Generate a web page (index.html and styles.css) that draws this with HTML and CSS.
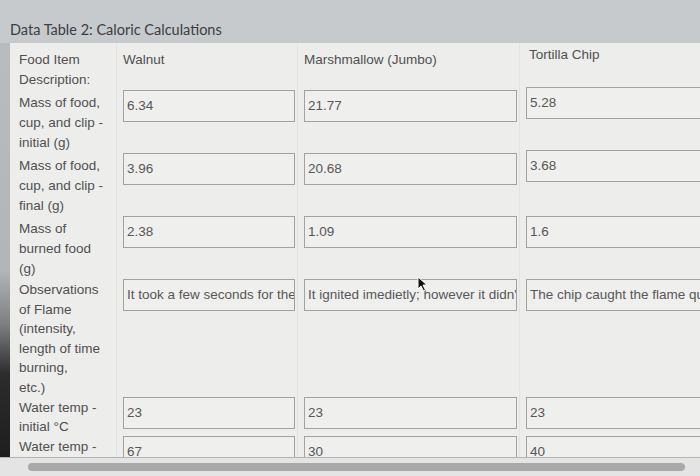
FILE: index.html
```html
<!DOCTYPE html>
<html>
<head>
<meta charset="utf-8">
<link rel="stylesheet" href="styles.css">
</head>
<body>
<div class="screen">
  <h2 class="title">Data Table 2: Caloric Calculations</h2>
  <div class="main">
    <div class="bezel"></div>
    <div class="table-wrap">
      <div class="grid">
        <div class="cell label head">Food Item<br>Description:</div>
        <div class="cell colhead head">Walnut</div>
        <div class="cell colhead head">Marshmallow (Jumbo)</div>
        <div class="cell colhead head tort">Tortilla Chip</div>

        <div class="cell label">Mass of food,<br>cup, and clip -<br>initial (g)</div>
        <div class="cell val"><div class="input">6.34</div></div>
        <div class="cell val"><div class="input">21.77</div></div>
        <div class="cell val"><div class="input up">5.28</div></div>

        <div class="cell label">Mass of food,<br>cup, and clip -<br>final (g)</div>
        <div class="cell val"><div class="input">3.96</div></div>
        <div class="cell val"><div class="input">20.68</div></div>
        <div class="cell val"><div class="input up">3.68</div></div>

        <div class="cell label">Mass of<br>burned food<br>(g)</div>
        <div class="cell val"><div class="input">2.38</div></div>
        <div class="cell val"><div class="input">1.09</div></div>
        <div class="cell val"><div class="input">1.6</div></div>

        <div class="cell label tight">Observations<br>of Flame<br>(intensity,<br>length of time<br>burning,<br>etc.)</div>
        <div class="cell val"><div class="input">It took a few seconds for the walnut to catch fire</div></div>
        <div class="cell val"><div class="input">It ignited imedietly; however it didn't last long</div></div>
        <div class="cell val"><div class="input">The chip caught the flame quickly</div></div>

        <div class="cell label tighter">Water temp -<br>initial °C</div>
        <div class="cell val"><div class="input">23</div></div>
        <div class="cell val"><div class="input">23</div></div>
        <div class="cell val"><div class="input">23</div></div>

        <div class="cell label tighter">Water temp -<br>final °C</div>
        <div class="cell val"><div class="input">67</div></div>
        <div class="cell val"><div class="input">30</div></div>
        <div class="cell val"><div class="input">40</div></div>
      </div>
    </div>
  </div>
  <div class="scrollbar"><div class="thumb"></div></div>
  <svg class="cursor" width="11" height="16" viewBox="0 0 11 16"><path d="M1 1 L1 13 L4 10 L6.5 15 L8.5 14 L6 9 L10 9 Z" fill="#111" stroke="#fff" stroke-width="1"/></svg>
</div>
</body>
</html>
```
FILE: styles.css
```css
html, body {
  margin: 0;
  padding: 0;
}
body {
  width: 700px;
  height: 476px;
  overflow: hidden;
  background: #c6cacd;
}
.screen {
  position: relative;
  width: 700px;
  height: 476px;
  display: flex;
  flex-direction: column;
}
.title {
  margin: 0;
  padding: 20px 0 0 10px;
  height: 23px;
  font-family: "Lato", "Open Sans", sans-serif;
  font-weight: normal;
  font-size: 14.5px;
  line-height: 20px;
  color: #3c3d3f;
}
.main {
  display: flex;
  height: 414px;
}
.bezel {
  width: 10px;
  flex: none;
  background: linear-gradient(to bottom, #b8bcbf 0, #b3b6b8 55%, #7c7e80 68%, #2c2c2c 80%, #1e1e1e 100%);
}
.table-wrap {
  flex: 1;
  overflow: hidden;
  background: #ededeb;
}
.grid {
  display: grid;
  grid-template-columns: 106px 181px 222px 220px;
  font-family: "Liberation Sans", Arial, sans-serif;
  font-size: 13.5px;
  line-height: 20px;
  color: #505050;
}
.cell {
  padding: 3px 0 0 6px;
  border-left: 1px solid #e3e3e1;
}
.cell.label {
  border-left: none;
  padding: 3px 4px 0 9px;
  white-space: nowrap;
}
.cell.tight {
  padding-top: 1px;
  line-height: 19.5px;
}
.cell.tighter {
  padding-top: 1px;
  line-height: 19px;
}
.cell.head {
  padding-top: 7px;
  padding-bottom: 0;
}
.colhead {
  padding-left: 6px;
}
.colhead.tort {
  padding-left: 9px;
  margin-top: -5px;
}
.cell.val {
  padding: 0 0 0 6px;
}
.input {
  height: 32px;
  box-sizing: border-box;
  border: 1px solid #a2a2a0;
  background: #efefed;
  padding: 5px 2px 0 3px;
  white-space: nowrap;
  overflow: hidden;
  margin-right: 2px;
  color: #575757;
}
.input.up {
  margin-top: -3px;
}
.scrollbar {
  height: 19px;
  background: #e4e4e4;
  border-top: 1px solid #b4b4b4;
  box-sizing: border-box;
  padding: 5px 15px 0 28px;
}
.thumb {
  height: 8px;
  border-radius: 4px;
  background: #a9a9a9;
}
.cursor {
  position: absolute;
  left: 417px;
  top: 276px;
}
```
